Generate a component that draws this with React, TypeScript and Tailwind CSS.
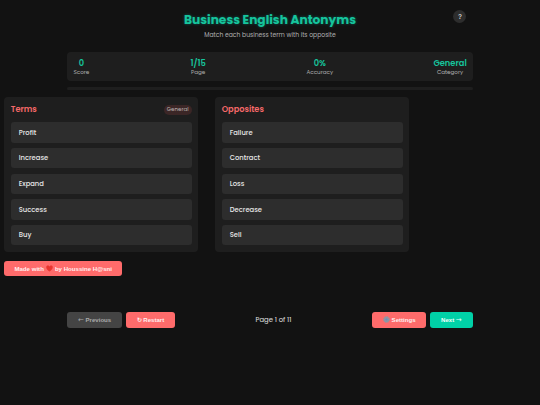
import type { ReactNode } from 'react';
import clsx from 'clsx';

const stats = [
  { value: '0', label: 'Score', className: 'w-[16px]' },
  { value: '1/15', label: 'Page', className: 'w-[16px]' },
  { value: '0%', label: 'Accuracy', className: 'w-[26px]' },
  { value: 'General', label: 'Category', className: 'w-[33px]' },
];

const terms = ['Profit', 'Increase', 'Expand', 'Success', 'Buy'];
const opposites = ['Failure', 'Contract', 'Loss', 'Decrease', 'Sell'];

function Heart() {
  return (
    <svg viewBox="0 0 16 16" className="mx-[2px] size-[7px] shrink-0">
      <path
        fill="#e8352f"
        d="M8 15 C6.5 13.4 0.5 9.3 0.5 4.9 C0.5 2.4 2.2 1 4.2 1 C6 1 7.4 2.2 8 3.6 C8.6 2.2 10 1 11.8 1 C13.8 1 15.5 2.4 15.5 4.9 C15.5 9.3 9.5 13.4 8 15 Z"
      />
    </svg>
  );
}

function Gear() {
  return (
    <svg viewBox="0 0 16 16" className="mr-[2px] size-[7px] shrink-0">
      <circle cx="8" cy="8" r="6.8" fill="none" stroke="#8a9aa8" strokeWidth="2.2" strokeDasharray="2.67 2.67" />
      <circle cx="8" cy="8" r="4.7" fill="none" stroke="#8a9aa8" strokeWidth="2.8" />
      <circle cx="8" cy="8" r="2.8" fill="#4aa3d0" />
    </svg>
  );
}

function Arrow({ children }: { children: string }) {
  return (
    <span className="pt-[2px] font-['DejaVu_Sans',sans-serif] text-[7px] leading-none font-normal">{children}</span>
  );
}

function ActionButton({ className, children }: { className: string; children: ReactNode }) {
  return (
    <button
      className={clsx(
        "flex h-[15.4px] items-center justify-center rounded-[3px] font-['Liberation_Sans',sans-serif] text-[6.1px] leading-none font-bold whitespace-nowrap",
        className,
      )}
    >
      {children}
    </button>
  );
}

function WordPanel({ title, words, badge }: { title: string; words: string[]; badge?: string }) {
  return (
    <section className="h-[155px] w-[194px] rounded-[4px] bg-[#1e1e1e] px-[6.5px] pt-[7px]">
      <div className="flex h-[11px] items-center justify-between">
        <h2 className="text-[8.2px] leading-none font-semibold text-[#f66969]">{title}</h2>
        {badge && (
          <span className="flex h-[10px] w-[28px] items-center justify-center rounded-full bg-[#3b2626] text-[5.5px] leading-none text-[#bdb5b5]">
            {badge}
          </span>
        )}
      </div>
      <ul className="mt-[7.2px] flex flex-col gap-[5.2px]">
        {words.map((word) => (
          <li
            key={word}
            className="flex h-[20.5px] items-center rounded-[3px] bg-[#2d2d2d] pt-[1px] pl-[8px] text-[6.8px] leading-none font-medium text-[#e8e8e8]"
          >
            {word}
          </li>
        ))}
      </ul>
    </section>
  );
}

export default function App() {
  return (
    <main className="relative h-[405px] w-full overflow-hidden bg-[#121212] font-['Poppins','Inter',sans-serif]">
      <header className="flex h-[52px] flex-col items-center pt-[12px]">
        <h1 className="text-[12.2px] leading-[15px] font-bold whitespace-nowrap text-[#16c49c] [text-shadow:0_0_3px_#03dac666]">
          Business English Antonyms
        </h1>
        <p className="mt-[4px] text-[6.08px] leading-[8px] text-[#b0b0b0]">Match each business term with its opposite</p>
      </header>

      <button className="absolute top-[10.4px] left-[453.4px] flex size-[13px] items-center justify-center rounded-full bg-[#2d2d2d] font-['Liberation_Sans',sans-serif] text-[6.5px] leading-none font-bold text-[#d0d0d0]">
        ?
      </button>

      <div className="mx-auto w-[405.2px]">
        <div className="flex h-[28.5px] justify-between rounded-[4px] bg-[#1e1e1e] px-[6px] pt-[5.5px]">
          {stats.map((stat) => (
            <div key={stat.label} className={clsx('flex flex-col items-center whitespace-nowrap', stat.className)}>
              <span className="text-[8.3px] leading-[10px] font-semibold text-[#16c49c]">{stat.value}</span>
              <span className="mt-[0.5px] text-[5.6px] leading-[8px] text-[#b0b0b0]">{stat.label}</span>
            </div>
          ))}
        </div>
        <div className="mt-[6.5px] h-[3px] rounded-full bg-[#1e1e1e]" />
      </div>

      <div className="mt-[7px] ml-[4.2px] flex gap-[17px]">
        <WordPanel title="Terms" words={terms} badge="General" />
        <WordPanel title="Opposites" words={opposites} />
      </div>

      <div className="mt-[9px] ml-[4.2px]">
        <ActionButton className="w-[118px] bg-[#ff6b6b] text-[#fff0f0]">
          Made with <Heart /> by Houssine H@sni
        </ActionButton>
      </div>

      <nav className="mx-auto mt-[35.9px] flex w-[405.2px] items-center justify-between">
        <div className="flex gap-[4px]">
          <ActionButton className="w-[54.5px] gap-[1.5px] bg-[#444444] text-[#aaaaaa]">
            <Arrow>←</Arrow>
            Previous
          </ActionButton>
          <ActionButton className="w-[49px] bg-[#ff6b6b] text-[#fff0f0]">↻ Restart</ActionButton>
        </div>
        <span className="text-[6.8px] leading-none text-[#e0e0e0]">Page 1 of 11</span>
        <div className="flex gap-[4px]">
          <ActionButton className="w-[54px] bg-[#ff6b6b] text-[#fff0f0]">
            <Gear />
            Settings
          </ActionButton>
          <ActionButton className="w-[42.5px] gap-[1.5px] bg-[#00d1a7] text-[#effffb]">
            Next
            <Arrow>→</Arrow>
          </ActionButton>
        </div>
      </nav>
    </main>
  );
}
